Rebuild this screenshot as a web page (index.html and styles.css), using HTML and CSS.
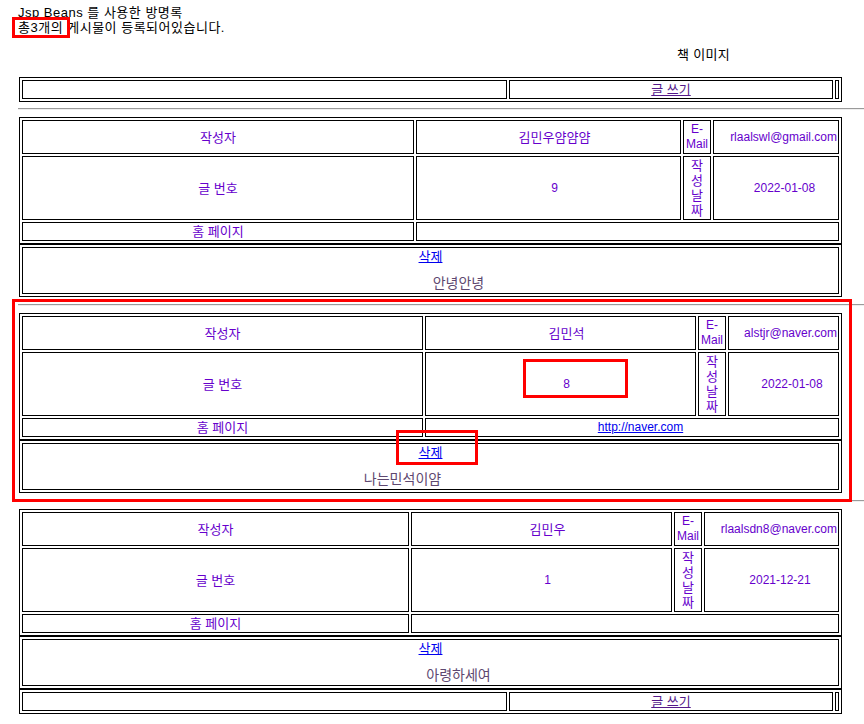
FILE: index.html
```html
<!DOCTYPE html>
<html lang="ko">
<head>
<meta charset="utf-8">
<title>Jsp Beans 를 사용한 방명록</title>
<link rel="stylesheet" href="styles.css">
</head>
<body>
<div class="page">
  <div class="intro">Jsp Beans 를 사용한 방명록<br>총3개의 게시물이 등록되어있습니다.</div>
  <div class="book">책 이미지</div>

  <table class="bar top">
    <tr><td class="b1"></td><td class="b2"><a class="visited" href="#">글 쓰기</a></td><td class="b3"></td></tr>
  </table>
  <hr class="first">

  <table class="info e1">
    <tr><td class="c1">작성자</td><td class="c2"><span class="v">김민우얌얌얌</span></td><td class="c3 lat">E-Mail</td><td class="c4 lat em">rlaalswl@gmail.com</td></tr>
    <tr><td>글 번호</td><td class="lat"><span class="v">9</span></td><td><span class="stack">작성날짜</span></td><td class="lat"><span class="vd">2022-01-08</span></td></tr>
    <tr><td>홈 페이지</td><td colspan="3"></td></tr>
  </table>
  <table class="content">
    <tr><td><a class="del" href="#">삭제</a><div class="msg sr">안녕안녕</div></td></tr>
  </table>
  <hr>

  <table class="info e2">
    <tr><td class="c1">작성자</td><td class="c2"><span class="v">김민석</span></td><td class="c3 lat">E-Mail</td><td class="c4 lat em">alstjr@naver.com</td></tr>
    <tr><td>글 번호</td><td class="lat"><span class="v">8</span></td><td><span class="stack">작성날짜</span></td><td class="lat"><span class="vd">2022-01-08</span></td></tr>
    <tr><td>홈 페이지</td><td colspan="3" class="lat"><a class="home" href="#">http://naver.com</a></td></tr>
  </table>
  <table class="content">
    <tr><td><a class="del" href="#">삭제</a><div class="msg sl">나는민석이얌</div></td></tr>
  </table>
  <hr>

  <table class="info e3">
    <tr><td class="c1">작성자</td><td class="c2"><span class="v">김민우</span></td><td class="c3 lat">E-Mail</td><td class="c4 lat em">rlaalsdn8@naver.com</td></tr>
    <tr><td>글 번호</td><td class="lat"><span class="v">1</span></td><td><span class="stack">작성날짜</span></td><td class="lat"><span class="vd">2021-12-21</span></td></tr>
    <tr><td>홈 페이지</td><td colspan="3"></td></tr>
  </table>
  <table class="content">
    <tr><td><a class="del" href="#">삭제</a><div class="msg sr">아령하세여</div></td></tr>
  </table>
  <table class="bar">
    <tr><td class="b1"></td><td class="b2"><a class="visited" href="#">글 쓰기</a></td><td class="b3"></td></tr>
  </table>
</div>

<div class="mark m-total"></div>
<div class="mark m-entry"></div>
<div class="mark m-num"></div>
<div class="mark m-del"></div>
</body>
</html>
```

FILE: styles.css
```css
html, body {
  margin: 0;
  padding: 0;
  background: #fff;
}
body {
  font-family: "Liberation Sans", "Noto Sans CJK KR", sans-serif;
  font-size: 13px;
  line-height: 15px;
  color: #000;
}
.page {
  padding: 5px 0 0 18px;
}
.intro {
  letter-spacing: 0.5px;
}
.book {
  margin-top: 12px;
  padding-left: 659px;
  letter-spacing: 0.3px;
}

table {
  box-sizing: border-box;
  width: 823px;
  margin-left: 1px;
  border: 1px solid #000;
  border-collapse: separate;
  border-spacing: 2px;
  table-layout: fixed;
  font-size: 13px;
  line-height: 15px;
}
td {
  border: 1px solid #000;
  padding: 1px;
  text-align: center;
  vertical-align: middle;
  color: #6600cc;
}

.bar.top { margin-top: 15px; }
.bar .b1 { width: 481px; }
.bar .b2 { width: 320px; }
.bar .b3 { width: 0; padding: 1px; }

a { color: #0000ee; text-decoration: underline; }
a.visited { color: #551a8b; }

hr {
  height: 0;
  margin: 7px 0;
  border: 0;
  border-top: 1px solid #9a9a9a;
  border-bottom: 1px solid #eeeeee;
}
hr.first { margin-top: 6px; }

.e1 .c1 { width: 388px; }
.e1 .c2 { width: 261px; }
.e1 .c3 { width: 24px; }
.e1 .c4 { width: 122px; }

.e2 .c1 { width: 397px; }
.e2 .c2 { width: 267px; }
.e2 .c3 { width: 24px; }
.e2 .c4 { width: 107px; }

.e3 .c1 { width: 383px; }
.e3 .c2 { width: 257px; }
.e3 .c3 { width: 24px; }
.e3 .c4 { width: 131px; }

td.lat { font-size: 12px; }
.v { padding-left: 12px; }
.vd { padding-left: 17px; }
.em { text-align: right; white-space: nowrap; }
.stack {
  display: block;
  width: 14px;
  margin: 0 auto;
  word-break: break-all;
}
.home { margin-left: 17px; }

.content .del { display: inline-block; }
.msg {
  font-size: 14px;
  line-height: 18px;
  padding-top: 10px;
  color: #5e4870;
}
.msg.sr { padding-left: 56px; }
.msg.sl { padding-right: 56px; }

.mark {
  position: absolute;
  box-sizing: border-box;
  border: 3px solid #ff0000;
  pointer-events: none;
}
.m-total { left: 12px; top: 17px; width: 58px; height: 21px; }
.m-entry { left: 12px; top: 299px; width: 840px; height: 203px; }
.m-num { left: 523px; top: 359px; width: 105px; height: 39px; }
.m-del { left: 396px; top: 430px; width: 82px; height: 35px; }
```
